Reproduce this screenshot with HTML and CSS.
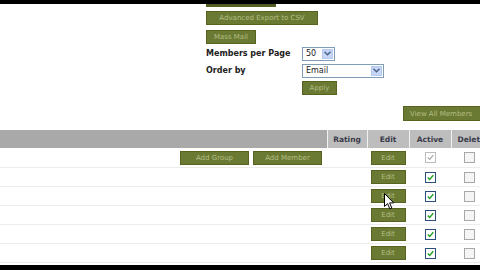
FILE: index.html
```html
<!DOCTYPE html>
<html lang="en">
  <head>
    <meta charset="UTF-8" />
    <title>Members</title>
    <link rel="stylesheet" href="styles.css">
  </head>
  <body>
    <div class="page">
      <div class="toolbar">
        <button class="btn btn-cut"></button>
        <button class="btn btn-export">Advanced Export to CSV</button>
        <button class="btn btn-mail">Mass Mail</button>

        <div class="options">
          <label class="opt-label">Members per Page</label>
          <span class="select select-small">
            <span class="select-value">50</span>
            <span class="select-arrow"><svg width="7" height="5" viewBox="0 0 7 5"><path d="M0.5 0.8 L3.5 3.8 L6.5 0.8" fill="none" stroke="#4d6185" stroke-width="1.4"/></svg></span>
          </span>
          <label class="opt-label">Order by</label>
          <span class="select select-wide">
            <span class="select-value">Email</span>
            <span class="select-arrow"><svg width="7" height="5" viewBox="0 0 7 5"><path d="M0.5 0.8 L3.5 3.8 L6.5 0.8" fill="none" stroke="#4d6185" stroke-width="1.4"/></svg></span>
          </span>
          <span></span>
          <button class="btn btn-apply">Apply</button>
        </div>
      </div>

      <div class="view-all">
        <button class="btn btn-view">View All Members</button>
      </div>

      <table class="members">
        <thead>
          <tr>
            <th class="col-main"></th>
            <th class="col-rating">Rating</th>
            <th class="col-edit">Edit</th>
            <th class="col-active">Active</th>
            <th class="col-delete">Delete</th>
          </tr>
        </thead>
        <tbody id="rows">
          <tr>
            <td class="col-main">
              <button class="btn btn-group">Add Group</button><button class="btn btn-member">Add Member</button>
            </td>
            <td></td>
            <td class="center"><button class="btn btn-edit">Edit</button></td>
            <td class="center"><span class="check disabled"><svg width="9" height="9" viewBox="0 0 9 9"><path d="M1.8 4.4 L3.7 6.4 L7.3 2.2" fill="none" stroke="#a9a9a9" stroke-width="1.3"/></svg></span></td>
            <td class="center"><span class="check off"></span></td>
          </tr>
        </tbody>
      </table>

      <svg class="cursor" width="12" height="18" viewBox="0 0 12 18">
        <path d="M0.5 0.5 L0.5 13.5 L3.6 10.6 L5.8 15.8 L7.8 15 L5.6 9.9 L9.8 9.9 Z" fill="#fff" stroke="#000" stroke-width="1"/>
      </svg>
    </div>

    <script>
      const rowsElement = document.querySelector("#rows");
      for (let i = 0; i < 5; i++) {
        const row = document.createElement("tr");
        row.innerHTML =
          '<td class="col-main"></td><td></td>' +
          '<td class="center"><button class="btn btn-edit">Edit</button></td>' +
          '<td class="center"><span class="check on"><svg width="9" height="9" viewBox="0 0 9 9"><path d="M1.8 4.4 L3.7 6.4 L7.3 2.2" fill="none" stroke="#21a121" stroke-width="1.4"/></svg></span></td>' +
          '<td class="center"><span class="check off"></span></td>';
        rowsElement.appendChild(row);
      }
    </script>
  </body>
</html>
```

FILE: styles.css
```css
* {
  margin: 0;
  padding: 0;
  box-sizing: border-box;
  font-family: "DejaVu Sans", Verdana, sans-serif;
}
body {
  background: #000;
  height: 270px;
  overflow: hidden;
}
.page {
  position: relative;
  margin-top: 4px;
  height: 261px;
  background: #fff;
  overflow: hidden;
}
.toolbar {
  display: flex;
  flex-direction: column;
  align-items: flex-start;
  padding-left: 206px;
}
.btn {
  display: block;
  height: 14px;
  background: #6b7a32;
  border: 1px solid #56641f;
  color: #b3be86;
  font-size: 7px;
  line-height: 12px;
  text-align: center;
  white-space: nowrap;
  overflow: hidden;
}
.btn-cut {
  width: 70px;
  margin-top: -11px;
  background: #4f5a24;
}
.btn-export {
  width: 112px;
  margin-top: 4px;
}
.btn-mail {
  width: 50px;
  margin-top: 5px;
}
.options {
  display: grid;
  grid-template-columns: 96px auto;
  row-gap: 2px;
  margin-top: 2px;
  align-items: center;
}
.opt-label {
  font-size: 8px;
  font-weight: bold;
  color: #222;
  line-height: 15px;
}
.select {
  display: flex;
  height: 14px;
  border: 1px solid #7f9db9;
  background: #fff;
}
.select-small {
  width: 33px;
}
.select-wide {
  width: 82px;
}
.select-value {
  flex: 1;
  font-size: 8px;
  line-height: 12px;
  padding-left: 3px;
  color: #222;
}
.select-arrow {
  width: 11px;
  margin: 1px;
  background: #c6d6f7;
  border: 1px solid #b5c8ef;
  display: flex;
  align-items: center;
  justify-content: center;
}
.btn-apply {
  width: 35px;
  margin-top: 1px;
}
.view-all {
  display: flex;
  padding-left: 403px;
  margin-top: 11px;
}
.btn-view {
  flex: none;
  width: 90px;
  height: 15px;
  text-align: left;
  padding-left: 6px;
}
.members {
  margin-top: 9px;
  border-collapse: collapse;
  table-layout: fixed;
  width: 491px;
}
.members th {
  height: 18px;
  padding: 0;
  background: #bdbdbd;
  border-left: 1px solid #f2f2f2;
  font-size: 7.5px;
  font-weight: bold;
  color: #3a3a4a;
  text-align: center;
}
.members th.col-main {
  background: #a9a9a9;
  border-left: none;
}
.col-main {
  width: 327px;
}
.col-rating {
  width: 40px;
}
.col-edit {
  width: 42px;
}
.col-active {
  width: 42px;
}
.col-delete {
  width: 40px;
}
.members td {
  height: 19px;
  padding: 0;
  line-height: 14px;
  border-bottom: 1px solid #ececec;
}
.members td.col-main {
  text-align: right;
  padding-right: 5px;
}
.members td.col-main .btn {
  display: inline-block;
  vertical-align: middle;
}
.center {
  text-align: center;
}
.btn-group,
.btn-member {
  width: 69px;
}
.btn-member {
  margin-left: 4px;
}
.btn-edit {
  display: inline-block;
  width: 35px;
  vertical-align: middle;
}
.check {
  display: inline-flex;
  align-items: center;
  justify-content: center;
  width: 11px;
  height: 11px;
  vertical-align: middle;
  background: #fff;
}
.check.on {
  border: 1px solid #2b4f7a;
}
.check.disabled {
  border: 1px solid #bcbcbc;
}
.check.off {
  border: 1px solid #a8a8a8;
  background: #f5f5f5;
}
.members td:last-child .check {
  margin-right: 4px;
}
.cursor {
  position: absolute;
  left: 384px;
  top: 189px;
}
```
